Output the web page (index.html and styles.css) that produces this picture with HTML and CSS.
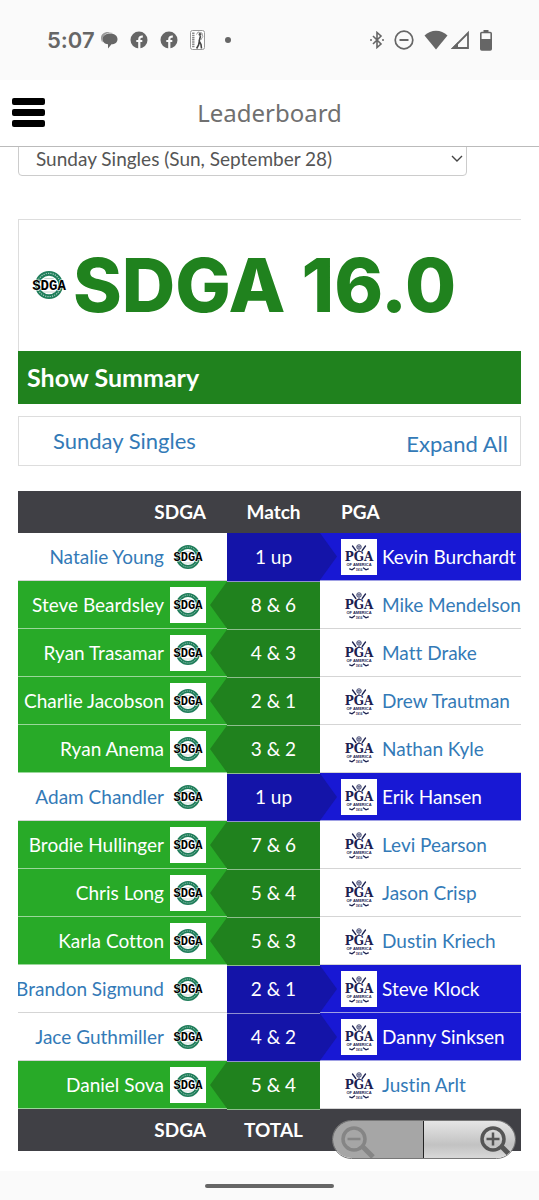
FILE: index.html
```html
<!DOCTYPE html>
<html lang="en">
<head>
  <meta charset="UTF-8" />
  <meta name="viewport" content="width=device-width, initial-scale=1.0" />
  <title>Leaderboard</title>
  <link rel="stylesheet" href="styles.css">
</head>
<body>

  <!-- shared team logos -->
  <svg class="defs" width="0" height="0" aria-hidden="true">
    <symbol id="sdga" viewBox="0 0 36 36">
      <circle cx="18" cy="18" r="10" fill="#fff" stroke="#1f7d5a" stroke-width="4"/>
      <circle cx="18" cy="18" r="10" fill="none" stroke="#a9d3c2" stroke-width="1" stroke-dasharray="1 1"/>
      <path d="M14 12.500h8M13 24h10" stroke="#b9c9c2" stroke-width=".7"/>
      <text x="18" y="22" text-anchor="middle" class="sdga-text">SDGA</text>
    </symbol>
    <symbol id="pga" viewBox="0 0 36 36">
      <g fill="none" stroke="#1b2150" stroke-width="1.300" stroke-linecap="round">
        <path d="M11.500 7l3.300 4.500M24.500 7l-3.300 4.500"/>
        <path d="M13.500 29l-2.500 1.800-2.300-.9M22.500 29l2.500 1.800 2.300-.9"/>
      </g>
      <circle cx="18" cy="8" r="2.300" fill="#c9cbdc" stroke="#1b2150" stroke-width=".7"/>
      <path d="M16.500 7.500h3M16.800 8.800h2.400M17 11.500h2" stroke="#1b2150" stroke-width=".5"/>
      <text x="18" y="22" text-anchor="middle" class="pga-text">PGA</text>
      <text x="18" y="26.500" text-anchor="middle" class="pga-small">OF AMERICA</text>
      <text x="18" y="31.500" text-anchor="middle" class="pga-year">1916</text>
    </symbol>
    <symbol id="fb" viewBox="0 0 18 18">
      <circle cx="9" cy="9" r="8.500" fill="#666"/>
      <path d="M9.300 18V8.300Q9.300 5.300 12.800 5.700M6.300 10h6" fill="none" stroke="#fafafa" stroke-width="2.200"/>
    </symbol>
  </svg>

  <div class="status">
    <div class="status-left">
      <span class="time">5:07</span>
      <svg width="18" height="18" viewBox="0 0 18 18"><path d="M2.500 11.500C-1 6 2 1 8 1h5C8 1 2.500 4 2.500 8z" fill="#999"/><path d="M10 2.500c5 0 7.500 2.500 7.500 5.800 0 3-2.500 5-6 5L8 17.500v-4.200C4.500 13 2.500 10.800 2.500 8.300 2.500 5 5.500 2.500 10 2.500z" fill="#666"/></svg>
      <svg width="18" height="18"><use href="#fb"/></svg>
      <svg width="18" height="18"><use href="#fb"/></svg>
      <svg width="15" height="20" viewBox="0 0 15 20"><rect x=".5" y=".5" width="14" height="19" rx="2" fill="#fff" stroke="#999"/><path d="M3.300 2.500v15" stroke="#888" stroke-width="2.400" stroke-dasharray="1.500 .7"/><circle cx="10" cy="4.500" r="1.400" fill="#555"/><path d="M6.500 4.500l1.500-2.500 4 1 .8 3.500-2 3.500" fill="none" stroke="#888" stroke-width=".8"/><path d="M10.500 6l-1.300 5 1.800 3.500.5 4M9.400 11l-.8 4-2 3.500" fill="none" stroke="#444" stroke-width="1.600"/></svg>
      <svg width="6" height="6" viewBox="0 0 6 6"><circle cx="3" cy="3" r="3" fill="#666"/></svg>
    </div>
    <div class="status-right">
      <svg width="14" height="18" viewBox="0 0 14 18"><path d="M3 5l8 8-4 3.500v-15L11 5l-8 8" fill="none" stroke="#666" stroke-width="1.600"/><circle cx="1" cy="9" r="1" fill="#666"/><circle cx="13" cy="9" r="1" fill="#666"/></svg>
      <svg width="20" height="20" viewBox="0 0 20 20"><circle cx="10" cy="10" r="8.800" fill="none" stroke="#666" stroke-width="1.700"/><path d="M5.500 10h9" stroke="#666" stroke-width="2"/></svg>
      <svg width="24" height="20" viewBox="0 0 24 20"><path d="M12 19.500L.5 5.500Q5.500 .8 12 .8t11.500 4.700z" fill="#666"/></svg>
      <svg width="20" height="20" viewBox="0 0 20 20"><path d="M18 3v15H3z" fill="none" stroke="#666" stroke-width="1.800"/><path d="M1 19l7-7v7z" fill="#666"/></svg>
      <svg width="12" height="21" viewBox="0 0 12 21"><rect x="3.500" width="5" height="3" fill="#666"/><rect x=".8" y="2.500" width="10.400" height="17.500" rx="1" fill="none" stroke="#666" stroke-width="1.600"/><path d="M1 9h10v11H1z" fill="#666"/></svg>
    </div>
  </div>

  <div class="header">
    <button class="menu" aria-label="Menu"><span></span><span></span><span></span></button>
    <h1>Leaderboard</h1>
  </div>

  <div class="content">
    <div class="round">
      <select class="round-select" aria-label="Round">
        <option>Sunday Singles (Sun, September 28)</option>
      </select>
      <svg class="chevron" width="12" height="8" viewBox="0 0 12 8"><path d="M1 1l5 5 5-5" fill="none" stroke="#444" stroke-width="1.400"/></svg>
    </div>

    <div class="score">
      <svg class="score-logo" width="42" height="42"><use href="#sdga"/></svg>
      <span>SDGA 16.0</span>
    </div>
    <button class="summary">Show Summary</button>

    <div class="session">
      <a href="#">Sunday Singles</a>
      <a href="#" class="expand">Expand All</a>
    </div>

    <table class="matches">
      <thead>
        <tr><th class="left">SDGA</th><th class="mid">Match</th><th class="right">PGA</th></tr>
      </thead>
      <tbody>
        <tr class="pga-win">
          <td><div class="team home"><a href="#">Natalie Young</a><svg class="logo"><use href="#sdga"/></svg></div></td>
          <td class="result">1 up</td>
          <td><div class="team away"><svg class="logo"><use href="#pga"/></svg><a href="#">Kevin Burchardt</a></div></td>
        </tr>
        <tr class="sdga-win">
          <td><div class="team home"><a href="#">Steve Beardsley</a><svg class="logo"><use href="#sdga"/></svg></div></td>
          <td class="result">8 &amp; 6</td>
          <td><div class="team away"><svg class="logo"><use href="#pga"/></svg><a href="#">Mike Mendelson</a></div></td>
        </tr>
        <tr class="sdga-win">
          <td><div class="team home"><a href="#">Ryan Trasamar</a><svg class="logo"><use href="#sdga"/></svg></div></td>
          <td class="result">4 &amp; 3</td>
          <td><div class="team away"><svg class="logo"><use href="#pga"/></svg><a href="#">Matt Drake</a></div></td>
        </tr>
        <tr class="sdga-win">
          <td><div class="team home"><a href="#">Charlie Jacobson</a><svg class="logo"><use href="#sdga"/></svg></div></td>
          <td class="result">2 &amp; 1</td>
          <td><div class="team away"><svg class="logo"><use href="#pga"/></svg><a href="#">Drew Trautman</a></div></td>
        </tr>
        <tr class="sdga-win">
          <td><div class="team home"><a href="#">Ryan Anema</a><svg class="logo"><use href="#sdga"/></svg></div></td>
          <td class="result">3 &amp; 2</td>
          <td><div class="team away"><svg class="logo"><use href="#pga"/></svg><a href="#">Nathan Kyle</a></div></td>
        </tr>
        <tr class="pga-win">
          <td><div class="team home"><a href="#">Adam Chandler</a><svg class="logo"><use href="#sdga"/></svg></div></td>
          <td class="result">1 up</td>
          <td><div class="team away"><svg class="logo"><use href="#pga"/></svg><a href="#">Erik Hansen</a></div></td>
        </tr>
        <tr class="sdga-win">
          <td><div class="team home"><a href="#">Brodie Hullinger</a><svg class="logo"><use href="#sdga"/></svg></div></td>
          <td class="result">7 &amp; 6</td>
          <td><div class="team away"><svg class="logo"><use href="#pga"/></svg><a href="#">Levi Pearson</a></div></td>
        </tr>
        <tr class="sdga-win">
          <td><div class="team home"><a href="#">Chris Long</a><svg class="logo"><use href="#sdga"/></svg></div></td>
          <td class="result">5 &amp; 4</td>
          <td><div class="team away"><svg class="logo"><use href="#pga"/></svg><a href="#">Jason Crisp</a></div></td>
        </tr>
        <tr class="sdga-win">
          <td><div class="team home"><a href="#">Karla Cotton</a><svg class="logo"><use href="#sdga"/></svg></div></td>
          <td class="result">5 &amp; 3</td>
          <td><div class="team away"><svg class="logo"><use href="#pga"/></svg><a href="#">Dustin Kriech</a></div></td>
        </tr>
        <tr class="pga-win">
          <td><div class="team home"><a href="#">Brandon Sigmund</a><svg class="logo"><use href="#sdga"/></svg></div></td>
          <td class="result">2 &amp; 1</td>
          <td><div class="team away"><svg class="logo"><use href="#pga"/></svg><a href="#">Steve Klock</a></div></td>
        </tr>
        <tr class="pga-win">
          <td><div class="team home"><a href="#">Jace Guthmiller</a><svg class="logo"><use href="#sdga"/></svg></div></td>
          <td class="result">4 &amp; 2</td>
          <td><div class="team away"><svg class="logo"><use href="#pga"/></svg><a href="#">Danny Sinksen</a></div></td>
        </tr>
        <tr class="sdga-win">
          <td><div class="team home"><a href="#">Daniel Sova</a><svg class="logo"><use href="#sdga"/></svg></div></td>
          <td class="result">5 &amp; 4</td>
          <td><div class="team away"><svg class="logo"><use href="#pga"/></svg><a href="#">Justin Arlt</a></div></td>
        </tr>
      </tbody>
      <tfoot>
        <tr><th class="left">SDGA</th><th class="mid">TOTAL</th><th class="right"></th></tr>
      </tfoot>
    </table>

    <div class="zoom">
      <button class="zoom-out" aria-label="Zoom out" disabled>
        <svg width="36" height="32" viewBox="0 0 36 32"><path d="M22.500 20.500L33 31" stroke="#858585" stroke-width="5"/><circle cx="14" cy="13" r="11" fill="none" stroke="#858585" stroke-width="3.500"/><path d="M7.500 13h13" stroke="#858585" stroke-width="2.500"/></svg>
      </button>
      <button class="zoom-in" aria-label="Zoom in">
        <svg width="36" height="32" viewBox="0 0 36 32"><path d="M22.500 20.500L33 31" stroke="#555" stroke-width="5"/><circle cx="14" cy="13" r="11" fill="none" stroke="#555" stroke-width="3.500"/><path d="M7.500 13h13M14 6.500v13" stroke="#555" stroke-width="2.500"/></svg>
      </button>
    </div>
  </div>

  <div class="navbar"><span></span></div>

</body>
</html>
```
FILE: styles.css
```css
* {
  box-sizing: border-box;
}

body {
  font-family: Lato, "Open Sans", sans-serif;
  font-size: 19px;
  font-variant-ligatures: none;
  background-color: #fff;
  margin: 0;
  height: 100vh;
  display: flex;
  flex-direction: column;
}

a {
  color: #337ab7;
  text-decoration: none;
}

button {
  font-family: inherit;
  border: 0;
  padding: 0;
  cursor: pointer;
}

svg {
  display: block;
  flex: none;
}

.defs {
  position: absolute;
}

/* status bar */
.status {
  flex: none;
  height: 80px;
  padding: 0 47px;
  background-color: #fafafa;
  display: flex;
  justify-content: space-between;
  align-items: center;
}

.status-left {
  display: flex;
  align-items: center;
  gap: 12px;
}

.status-left svg:last-child {
  margin-left: 8px;
}

.time {
  font-family: Inter, sans-serif;
  font-size: 22px;
  font-weight: 600;
  color: #666;
  margin-right: -7px;
}

.status-right {
  display: flex;
  align-items: center;
  gap: 10px;
}

.status-right svg:nth-child(4) {
  margin-left: -8px;
}

/* header */
.header {
  flex: none;
  height: 67px;
  border-bottom: 1px solid #bbb;
  padding: 0 12px 2px;
  display: grid;
  grid-template-columns: 33px 1fr 33px;
  align-items: center;
}

.header h1 {
  margin: 0;
  font-family: "Noto Sans", sans-serif;
  font-size: 24px;
  font-weight: 400;
  color: #707070;
  text-align: center;
}

.menu {
  background: none;
  display: flex;
  flex-direction: column;
  gap: 4px;
}

.menu span {
  width: 33px;
  height: 7px;
  border-radius: 2px;
  background-color: #000;
}

/* content, scrolled a little under the header */
.content {
  flex: 1;
  min-height: 0;
  overflow: hidden;
  position: relative;
  padding: 0 18px;
}

.round {
  position: relative;
  width: 449px;
  max-width: 100%;
  margin-top: -8px;
}

.round-select {
  appearance: none;
  display: block;
  width: 100%;
  height: 37px;
  padding: 2px 17px 0;
  border: 1px solid #ccc;
  border-radius: 4px;
  background-color: #fff;
  font-family: inherit;
  font-size: 19px;
  color: #555;
}

.chevron {
  position: absolute;
  right: 4px;
  top: 16px;
}

.score {
  margin-top: 43px;
  height: 132px;
  padding: 0 0 2px 9px;
  border: 1px solid #ddd;
  border-width: 1px 0 0 1px;
  display: flex;
  align-items: center;
  gap: 3px;
  font-family: Inter, sans-serif;
  font-size: 74px;
  font-weight: 800;
  color: #20821e;
  white-space: nowrap;
}

.summary {
  display: block;
  width: 100%;
  height: 53px;
  padding: 0 9px 2px;
  background-color: #20821e;
  color: #fff;
  font-size: 25px;
  font-weight: 700;
  text-align: left;
}

.session {
  margin-top: 12px;
  height: 50px;
  padding: 0 12px 2px 34px;
  border: 1px solid #ddd;
  display: flex;
  justify-content: space-between;
  align-items: center;
  font-size: 22px;
}

.expand {
  padding-top: 6px;
}

/* match table */
.matches {
  width: 100%;
  margin-top: 25px;
  border-collapse: collapse;
  table-layout: fixed;
}

.matches th {
  height: 42px;
  padding: 0 21px 2px;
  background-color: #404045;
  color: #fff;
  font-size: 19px;
  font-weight: 700;
}

.matches .left {
  width: 209px;
  text-align: right;
}

.matches .mid {
  width: 93px;
  padding: 0 0 2px;
}

.matches .right {
  text-align: left;
}

.matches td {
  padding: 0;
  height: 48px;
}

.team {
  height: 48px;
  border-bottom: 1px solid #d5d5d5;
  display: flex;
  align-items: center;
  gap: 6px;
  white-space: nowrap;
  overflow: hidden;
}

.team a {
  padding-bottom: 1px;
}

.home {
  justify-content: flex-end;
  padding-right: 21px;
}

.away {
  padding-left: 21px;
  gap: 5px;
}

.logo {
  width: 36px;
  height: 36px;
  background-color: #fff;
}

.matches .result {
  position: relative;
  padding-bottom: 1px;
  color: #fff;
  text-align: center;
  border-bottom: 1px solid #8fbe8e;
}

.sdga-win .result {
  background-color: #20821e;
}

.matches .pga-win .result {
  background-color: #1414a8;
  border-color: #9090d0;
}

.sdga-win .home {
  background-color: #28aa28;
  border-color: #9ad79a;
}

.pga-win .away {
  background-color: #1818d4;
  border-color: #a0a0e4;
}

.sdga-win .home a,
.pga-win .away a {
  color: #fff;
}

/* arrow pointing at the winner */
.result::before {
  content: "";
  position: absolute;
  top: 0;
  width: 17px;
  height: 47px;
}

.sdga-win .result::before {
  right: 100%;
  background-color: #20821e;
  clip-path: polygon(100% 0, 0 50%, 100% 100%);
}

.pga-win .result::before {
  left: 100%;
  background-color: #1414a8;
  clip-path: polygon(0 0, 100% 50%, 0 100%);
}

.sdga-text {
  font: bold 12px "Liberation Mono", monospace;
  stroke: #fff;
  stroke-width: 1px;
  paint-order: stroke;
}

.pga-text {
  font: bold 12px "DejaVu Serif", serif;
  fill: #1b2150;
}

.pga-small {
  font: bold 4px "Liberation Sans", sans-serif;
  fill: #1b2150;
}

.pga-year {
  font: bold 3px "Liberation Sans", sans-serif;
  fill: #1b2150;
}

/* floating zoom control */
.zoom {
  position: absolute;
  right: 23px;
  bottom: 12px;
  width: 184px;
  height: 39px;
  border: 1px solid #777;
  border-radius: 20px;
  overflow: hidden;
  display: flex;
}

.zoom button {
  width: 50%;
  display: flex;
  align-items: flex-end;
  padding: 0 7px;
}

.zoom .zoom-out {
  background-color: #a6a6a6;
  border-right: 1px solid #222;
}

.zoom .zoom-in {
  justify-content: flex-end;
  padding-right: 0;
  background: linear-gradient(#e6e6e6, #c2c2c2 65%, #d8d8d8);
}

/* gesture bar */
.navbar {
  flex: none;
  height: 29px;
  background-color: #fafafa;
  display: flex;
  justify-content: center;
  align-items: center;
}

.navbar span {
  width: 129px;
  height: 4px;
  border-radius: 2px;
  background-color: #666;
}
```
